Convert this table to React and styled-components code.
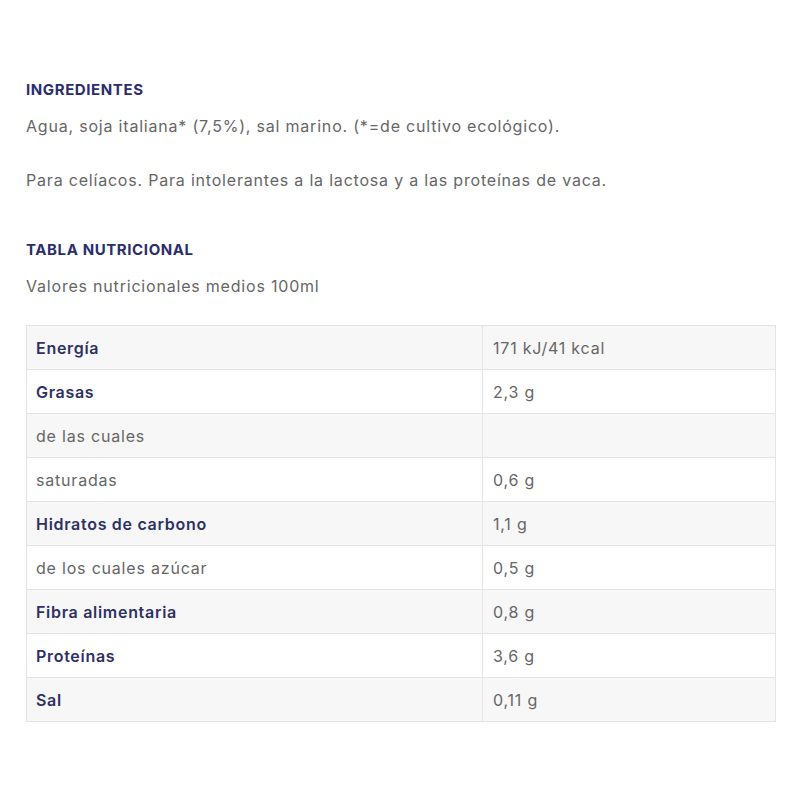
import React from "react";
import styled, { createGlobalStyle } from "styled-components";

const Global = createGlobalStyle`
  html, body { margin: 0; padding: 0; background: #fff; }
  body { font-family: "Inter", "Open Sans", sans-serif; }
`;

const Page = styled.div`
  width: 750px;
  padding: 80px 0 0 26px;
`;

const Heading = styled.h3`
  margin: ${(p) => p.$mt || 0}px 0 0 0;
  font-size: 15px;
  line-height: 20px;
  font-weight: 700;
  color: #2b2e6e;
  letter-spacing: 0.6px;
`;

const Text = styled.p`
  margin: ${(p) => p.$mt || 0}px 0 0 0;
  font-size: 16px;
  line-height: 24px;
  color: #666;
  letter-spacing: 0.8px;
`;

const Table = styled.div`
  margin-top: 27px;
  border: 1px solid #e4e4e4;
  display: grid;
  grid-template-columns: 455px 1fr;
`;

const Cell = styled.div`
  height: 43px;
  display: flex;
  align-items: center;
  padding-left: ${(p) => (p.$value ? 10 : 9)}px;
  background: ${(p) => (p.$odd ? "#f7f7f7" : "#fff")};
  border-top: ${(p) => (p.$first ? "none" : "1px solid #e4e4e4")};
  border-left: ${(p) => (p.$value ? "1px solid #e4e4e4" : "none")};
  font-size: 16px;
  letter-spacing: ${(p) => (p.$bold ? 0.7 : 0.8)}px;
  font-weight: ${(p) => (p.$bold ? 600 : 400)};
  color: ${(p) => (p.$bold ? "#2e3163" : "#666")};
`;

const rows = [
  ["Energía", "171 kJ/41 kcal", true],
  ["Grasas", "2,3 g", true],
  ["de las cuales", "", false],
  ["saturadas", "0,6 g", false],
  ["Hidratos de carbono", "1,1 g", true],
  ["de los cuales azúcar", "0,5 g", false],
  ["Fibra alimentaria", "0,8 g", true],
  ["Proteínas", "3,6 g", true],
  ["Sal", "0,11 g", true],
];

export default function App() {
  return (
    <>
      <Global />
      <Page>
        <Heading>INGREDIENTES</Heading>
        <Text $mt={14}>Agua, soja italiana* (7,5%), sal marino. (*=de cultivo ecológico).</Text>
        <Text $mt={30}>Para celíacos. Para intolerantes a la lactosa y a las proteínas de vaca.</Text>
        <Heading $mt={48}>TABLA NUTRICIONAL</Heading>
        <Text $mt={14}>Valores nutricionales medios 100ml</Text>
        <Table>
          {rows.map(([label, value, bold], i) => (
            <React.Fragment key={label}>
              <Cell $odd={i % 2 === 0} $first={i === 0} $bold={bold}>{label}</Cell>
              <Cell $odd={i % 2 === 0} $first={i === 0} $value>{value}</Cell>
            </React.Fragment>
          ))}
        </Table>
      </Page>
    </>
  );
}
